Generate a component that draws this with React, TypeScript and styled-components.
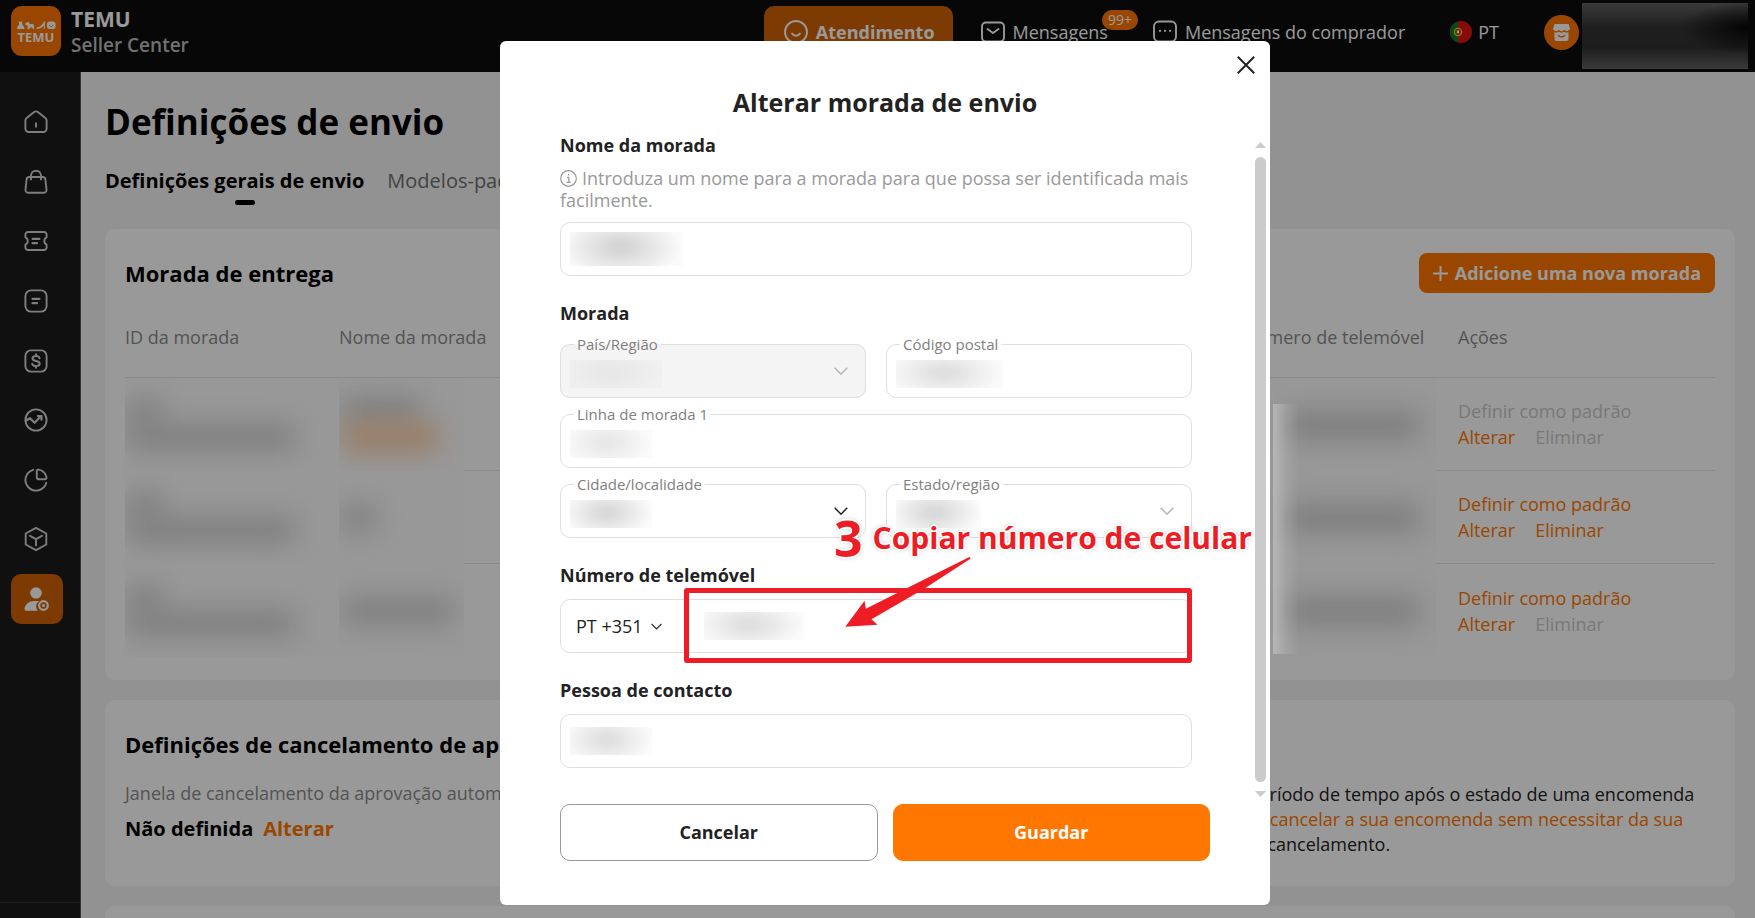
import React from "react";
import styled, { createGlobalStyle, css } from "styled-components";

const orange = "#ff7700";
const red = "#ee1c25";

const GlobalStyle = createGlobalStyle`
  *, *::before, *::after { box-sizing: border-box; }
  body {
    margin: 0;
    background: #f4f4f4;
    color: #000;
    font-family: "Open Sans", "Noto Sans", sans-serif;
    font-size: 18px;
    line-height: 24px;
  }
  button, input, select { font: inherit; color: inherit; }
  h1, h2, h3, p, fieldset { margin: 0; }
`;

/* ---------- page shell ---------- */

const Page = styled.div`
  display: flex;
  flex-direction: column;
  height: 100vh;
  overflow: hidden;
`;

const TopBar = styled.header`
  display: flex;
  align-items: flex-start;
  flex: none;
  height: 72px;
  padding: 0 7px 0 11px;
  background: #0d0d0d;
  color: #fff;
`;

const Brand = styled.a`
  display: flex;
  gap: 10px;
  margin-top: 6px;
  color: inherit;
  text-decoration: none;
`;

const BrandText = styled.span`
  display: flex;
  flex-direction: column;
`;

const BrandName = styled.strong`
  font-size: 21px;
  font-weight: 700;
  line-height: 26px;
`;

const BrandSub = styled.span`
  font-size: 19px;
  font-weight: 600;
  line-height: 26px;
  color: #bdbdbd;
`;

const TopNav = styled.nav`
  display: flex;
  align-items: center;
  gap: 45px;
  height: 64px;
  margin-left: auto;
`;

const NavGroup = styled.div`
  display: flex;
  align-items: center;
  gap: 28px;
`;

const SupportButton = styled.button`
  display: flex;
  align-items: center;
  gap: 8px;
  height: 52px;
  padding: 0 18px 0 20px;
  border: 0;
  border-radius: 10px;
  background: #d26105;
  color: #fff;
  font-weight: 700;
`;

const NavLink = styled.a`
  position: relative;
  display: flex;
  align-items: center;
  gap: 8px;
  color: #fff;
  text-decoration: none;
  white-space: nowrap;
`;

const CountBadge = styled.span`
  position: absolute;
  top: -10px;
  right: -30px;
  height: 20px;
  padding: 0 6px;
  border-radius: 10px;
  background: ${orange};
  font-size: 14px;
  line-height: 20px;
`;

const LanguageButton = styled.button`
  display: flex;
  align-items: center;
  gap: 6px;
  padding: 0;
  border: 0;
  background: none;
  color: #fff;
`;

const Account = styled.div`
  display: flex;
  align-items: center;
  gap: 3px;
`;

const AccountName = styled.span`
  width: 166px;
  height: 66px;
  margin-top: 8px;
  background: radial-gradient(ellipse 40% 40% at 100% 38%, #080808, transparent),
    linear-gradient(#626262, #353535 35%, #303030 68%, #626262);
`;

const Body = styled.div`
  display: flex;
  flex: 1;
  min-height: 0;
`;

const SideBar = styled.nav`
  display: flex;
  flex-direction: column;
  flex: none;
  width: 81px;
  padding-top: 25px;
  border-right: 1px solid #555;
  background: #1b1b1b;
`;

const SideList = styled.div`
  display: flex;
  flex-direction: column;
  justify-content: space-between;
  height: 527px;
  padding-left: 11px;
`;

const SideLink = styled.a<{ $active?: boolean }>`
  display: flex;
  align-items: center;
  width: 52px;
  height: 50px;
  padding-left: 13px;
  border-radius: 10px;
  color: ${(p) => (p.$active ? "#fff" : "#d2d2d2")};
  background: ${(p) => (p.$active ? "#d26105" : "transparent")};
`;

const SideFoot = styled.div`
  height: 16px;
  margin-top: auto;
  border-top: 1px solid #383838;
`;

const Main = styled.main`
  display: flex;
  flex: 1;
  flex-direction: column;
  gap: 20px;
  min-width: 0;
  padding: 26px 20px 0 24px;
`;

const PageHead = styled.div`
  padding-bottom: 14px;
`;

const PageTitle = styled.h1`
  font-size: 35px;
  font-weight: 700;
  line-height: 48px;
`;

const Tabs = styled.div`
  display: flex;
  gap: 23px;
  margin-top: 21px;
`;

const Tab = styled.a<{ $active?: boolean }>`
  position: relative;
  font-size: 20px;
  line-height: 28px;
  white-space: nowrap;
  text-decoration: none;
  color: #6f6f6f;
  ${(p) =>
    p.$active &&
    css`
      font-weight: 700;
      color: #000;
      &::after {
        content: "";
        position: absolute;
        top: 33px;
        left: 50%;
        width: 20px;
        height: 5px;
        border-radius: 3px;
        background: #000;
      }
    `}
`;

const Card = styled.section`
  padding: 24px 20px 23px;
  border-radius: 10px;
  background: #fff;
`;

const NextCard = styled(Card)`
  flex: 1;
  padding: 0;
  border-radius: 10px 10px 0 0;
`;

const CardHead = styled.div`
  display: flex;
  align-items: center;
  justify-content: space-between;
  height: 40px;
  margin-bottom: 3px;
`;

const CardTitle = styled.h2`
  font-size: 22px;
  font-weight: 700;
  line-height: 40px;
  white-space: nowrap;
`;

const AddButton = styled.button`
  display: flex;
  align-items: center;
  gap: 7px;
  height: 40px;
  padding: 0 14px;
  border: 0;
  border-radius: 8px;
  background: ${orange};
  color: #fff;
  font-weight: 700;
`;

/* ---------- address table ---------- */

const AddressTable = styled.table`
  width: 100%;
  table-layout: fixed;
  border-spacing: 0;
`;

const HeadCell = styled.th<{ $width?: number }>`
  width: ${(p) => (p.$width ? `${p.$width}px` : "auto")};
  height: 82px;
  padding: 0;
  border-bottom: 1px solid #e6e6e6;
  color: #8c8c8c;
  font-weight: 400;
  text-align: left;
  white-space: nowrap;
`;

const Cell = styled.td`
  height: 93px;
  padding: 0;
  border-bottom: 1px solid #e6e6e6;
  tr:last-child > & {
    border-bottom: 0;
  }
`;

const HiddenCell = styled(Cell)`
  border-bottom: 0;
  background: #fdfdfd;
`;

const SmudgeStack = styled.div<{ $indent?: number }>`
  display: flex;
  flex-direction: column;
  justify-content: center;
  height: 93px;
  padding-left: ${(p) => p.$indent ?? 0}px;
  overflow: hidden;
`;

const Smudge = styled.span<{ $width: number; $height: number; $tint?: string }>`
  flex: none;
  width: ${(p) => p.$width}px;
  height: ${(p) => p.$height}px;
  background: ${(p) => p.$tint ?? "#d0d0d0"};
  filter: blur(13px);
`;

const ActionCell = styled.div`
  display: flex;
  flex-wrap: wrap;
  column-gap: 20px;
  padding-left: 22px;
  line-height: 26px;
`;

const HeadInset = styled.span`
  padding-left: 22px;
`;

const TextButton = styled.button<{ $wide?: boolean }>`
  padding: 0;
  border: 0;
  background: none;
  line-height: 26px;
  color: ${orange};
  margin-right: ${(p) => (p.$wide ? "60px" : "0")};
  &:disabled {
    color: #cacaca;
  }
`;

/* ---------- cancellation card ---------- */

const CancelCard = styled(Card)`
  display: grid;
  grid-template-columns: 1fr 482px;
  height: 186px;
`;

const CancelLabel = styled.p`
  margin-top: 16px;
  line-height: 26px;
  color: #8c8c8c;
  white-space: nowrap;
`;

const CancelValue = styled.p`
  display: flex;
  gap: 10px;
  margin-top: 9px;
  font-size: 20px;
  font-weight: 700;
  line-height: 28px;
`;

const StrongLink = styled.a`
  color: ${orange};
  text-decoration: none;
`;

const CancelNote = styled.p`
  margin-top: 58px;
  line-height: 25px;
  color: #222;
  white-space: nowrap;
`;

const Accent = styled.span`
  color: ${orange};
`;

/* ---------- dialog ---------- */

const Backdrop = styled.div`
  position: fixed;
  inset: 0;
  display: flex;
  align-items: flex-start;
  justify-content: center;
  padding: 41px 0 0 15px;
  background: rgba(0, 0, 0, 0.4);
`;

const Dialog = styled.section`
  position: relative;
  width: 770px;
  padding-bottom: 44px;
  border-radius: 6px;
  background: #fff;
  color: #222;
`;

/* light bleeding out of the dialog over the hidden phone column */
const EdgeGlow = styled.div`
  position: absolute;
  top: 363px;
  left: calc(100% + 3px);
  width: 26px;
  height: 250px;
  background: linear-gradient(90deg, rgba(255, 255, 255, 0.3), rgba(255, 255, 255, 0.1) 50%, transparent);
`;

const DialogTitle = styled.h2`
  padding: 44px 0 14px;
  font-size: 25px;
  font-weight: 700;
  line-height: 34px;
  text-align: center;
`;

const CloseButton = styled.button`
  position: absolute;
  top: 12px;
  right: 12px;
  display: grid;
  place-items: center;
  width: 24px;
  height: 24px;
  padding: 0;
  border: 0;
  background: none;
`;

const DialogBody = styled.div`
  display: flex;
  gap: 63px;
  padding: 0 4px 0 60px;
`;

const Form = styled.form`
  display: flex;
  flex: 1;
  flex-direction: column;
  gap: 25px;
  min-width: 0;
  padding-bottom: 34px;
`;

const Group = styled.div`
  position: relative;
`;

const Label = styled.label`
  display: block;
  margin-bottom: 12px;
  font-weight: 700;
`;

const GroupTitle = styled.h3`
  margin-bottom: 9px;
  font-size: 18px;
  font-weight: 700;
  line-height: 24px;
`;

const Hint = styled.p`
  margin: -2px 0 11px;
  line-height: 22px;
  color: #999;
  svg {
    margin-right: 5px;
    vertical-align: -2px;
  }
`;

const Box = styled.div`
  display: flex;
  align-items: center;
  height: 54px;
  padding: 0 17px 0 9px;
  border: 1px solid #dedede;
  border-radius: 10px;
`;

const TextInput = styled.input`
  flex: 1;
  min-width: 0;
  height: 32px;
  padding: 0 8px;
  border: 0;
  outline: 0;
  background: none;
`;

const Mask = styled.span<{ $width: number; $height?: number; $tone?: string }>`
  flex: none;
  width: ${(p) => p.$width}px;
  height: ${(p) => p.$height ?? 28}px;
  background: radial-gradient(
    ellipse 55% 95% at 45% 45%,
    ${(p) => p.$tone ?? "#e0e0e0"} 15%,
    rgba(170, 170, 170, 0.05)
  );
`;

const Fields = styled.div`
  display: grid;
  grid-template-columns: 1fr 1fr;
  gap: 6px 20px;
`;

const Outlined = styled.fieldset<{ $full?: boolean; $muted?: boolean }>`
  grid-column: ${(p) => (p.$full ? "1 / -1" : "auto")};
  min-width: 0;
  height: 64px;
  padding: 0 17px 0 9px;
  border: 1px solid #dedede;
  border-radius: 10px;
  background: ${(p) => (p.$muted ? "#f4f4f4" : "transparent")};
`;

const Legend = styled.legend`
  margin-left: 4px;
  padding: 0 3px;
  font-size: 15px;
  line-height: 20px;
  color: #808080;
`;

const Line = styled.div`
  display: flex;
  align-items: center;
  height: 40px;
  svg {
    margin-bottom: 6px;
  }
`;

const SelectInput = styled.select`
  flex: 1;
  min-width: 0;
  height: 32px;
  padding: 0;
  border: 0;
  outline: 0;
  appearance: none;
  background: none;
`;

const PrefixSelect = styled.select`
  width: 68px;
  padding: 0;
  border: 0;
  outline: 0;
  appearance: none;
  background: none;
`;

const PrefixPart = styled.div`
  display: flex;
  align-items: center;
  gap: 7px;
  width: 134px;
  padding-left: 6px;
`;

const Highlight = styled.div`
  position: absolute;
  inset: 25px 0 -10px 124px;
  border: 5px solid ${red};
  border-radius: 3px;
  pointer-events: none;
`;

const Callout = styled.div`
  position: absolute;
  top: -50px;
  left: 274px;
  display: flex;
  align-items: center;
  gap: 10px;
  color: ${red};
  font-size: 30px;
  font-weight: 700;
  line-height: 50px;
  white-space: nowrap;
  pointer-events: none;
  text-shadow: 2px 0 #fff, -2px 0 #fff, 0 2px #fff, 0 -2px #fff, 1px 1px #fff,
    -1px -1px #fff, 1px -1px #fff, -1px 1px #fff, 0 0 4px #777;
`;

const CalloutNumber = styled.span`
  font-size: 50px;
`;

const CalloutArrow = styled.svg`
  position: absolute;
  top: -6px;
  left: 285px;
  pointer-events: none;
`;

const ScrollTrack = styled.div`
  display: flex;
  flex: none;
  flex-direction: column;
  align-items: center;
  gap: 9px;
  width: 11px;
  padding: 9px 0 5px;
`;

const ScrollThumb = styled.div`
  flex: 1;
  width: 11px;
  border-radius: 6px;
  background: #cbcbcb;
`;

const DialogFoot = styled.div`
  display: grid;
  grid-template-columns: 1fr 1fr;
  gap: 15px;
  padding: 2px 60px 0;
`;

const DialogButton = styled.button<{ $primary?: boolean }>`
  height: 57px;
  padding-bottom: 3px;
  border: 1px solid ${(p) => (p.$primary ? orange : "#999")};
  border-radius: 10px;
  background: ${(p) => (p.$primary ? orange : "#fff")};
  color: ${(p) => (p.$primary ? "#fff" : "#222")};
  font-weight: 700;
`;

/* ---------- drawings ---------- */

const Icon = ({ children, size = 24 }: { children: React.ReactNode; size?: number }) => (
  <svg
    width={size}
    height={size}
    viewBox="0 0 24 24"
    fill="none"
    stroke="currentColor"
    strokeWidth="1.9"
    strokeLinecap="round"
    strokeLinejoin="round"
    aria-hidden="true"
  >
    {children}
  </svg>
);

const sideIcons: { name: string; drawing: React.ReactNode }[] = [
  {
    name: "Início",
    drawing: (
      <>
        <path d="M1.4 10.6c0-1 .4-1.9 1.2-2.5L9.8 2.3a3.4 3.4 0 0 1 4.4 0l7.2 5.8c.8.6 1.2 1.5 1.2 2.5v8.2a3.2 3.2 0 0 1-3.2 3.2H4.6a3.2 3.2 0 0 1-3.2-3.2z" />
        <path d="M12 13.2v3.6" />
      </>
    ),
  },
  {
    name: "Produtos",
    drawing: (
      <>
        <path d="M5.4 7h13.2c1.5 0 2.6 1 2.8 2.4l1.1 10c.2 1.9-1 3.3-2.9 3.3H4.4c-1.9 0-3.1-1.4-2.9-3.3l1.1-10C2.8 8 3.9 7 5.4 7z" />
        <path d="M7 9.5V5.8a5 5 0 0 1 10 0v3.7" />
      </>
    ),
  },
  {
    name: "Cupões",
    drawing: (
      <>
        <path d="M4 3h16a2.6 2.6 0 0 1 2.6 2.6v2.7c-1.5.7-2.3 2-2.3 3.7s.8 3 2.3 3.7v2.7A2.6 2.6 0 0 1 20 21H4a2.6 2.6 0 0 1-2.6-2.6v-2.7c1.5-.7 2.3-2 2.3-3.7s-.8-3-2.3-3.7V5.6A2.6 2.6 0 0 1 4 3z" />
        <path d="M8.5 9.8h7M8.5 14.2H13" strokeWidth="2.2" />
      </>
    ),
  },
  {
    name: "Encomendas",
    drawing: (
      <>
        <rect x="1.4" y="1.4" width="21.2" height="21.2" rx="5.5" />
        <path d="M8.5 9.8h7M8.5 14.2H13" strokeWidth="2.2" />
      </>
    ),
  },
  {
    name: "Finanças",
    drawing: (
      <>
        <rect x="1.4" y="1.4" width="21.2" height="21.2" rx="5.5" />
        <path d="M15.6 9.2c-.3-1.4-1.7-2.2-3.6-2.2-2 0-3.5.9-3.5 2.5 0 3.5 7.2 1.5 7.2 5 0 1.6-1.6 2.5-3.7 2.5s-3.5-.9-3.8-2.3M12 5.3V7M12 17v1.7" strokeWidth="2" />
      </>
    ),
  },
  {
    name: "Crescimento",
    drawing: (
      <>
        <circle cx="12" cy="12" r="10.6" />
        <path d="M2 12.5l4-2.3 4.6 4.6 6-6.3M13.8 8h3.7v3.7" strokeWidth="2.2" />
      </>
    ),
  },
  {
    name: "Dados",
    drawing: (
      <>
        <path d="M9.2 1.8A10.6 10.6 0 1 0 22.3 14.8" />
        <path d="M12.8 3.2c0-1 .8-1.8 1.8-1.6 4.2.8 7 3.6 7.9 7.8.2 1-.6 1.9-1.6 1.9h-5.7a2.4 2.4 0 0 1-2.4-2.4z" />
      </>
    ),
  },
  {
    name: "Logística",
    drawing: (
      <>
        <path d="M12 .9l10.3 5.6v11L12 23.1 1.7 17.500v-11z" />
        <path d="M6 8.8l6 3.4 6-3.4M12 12.2v6.3" />
      </>
    ),
  },
];

const LogoMark = () => (
  <svg width="50" height="50" viewBox="0 0 50 50" aria-hidden="true">
    <rect width="50" height="50" rx="11" fill={orange} />
    <g fill="#fff">
      <path d="M7.5 15.5h1.200l.6.9.6-.9h1.300l-.2 2.700c1.600 1.500 2.300 3 2.600 4.800H6c.3-1.800 1-3.300 2.300-4.800z" />
      <path d="M14.500 16.800l3.500-.7.7 1.900h2.600l1.800.7-.6 1 1 .8-.8 1.200.8 1.200-1.700-.2-.9-1.200-1.500.1-1.200 1.400-2.200.2.9-1.700-.6-2.200-1.900-.2z" />
      <path d="M25.500 21.500c3.500-.3 5.800-2.400 7.500-6.200l1 .4-.3 7.300-.9-.1-.2-3.700c-1.600 2.600-3.700 3.700-7 3.700z" />
      <rect x="36" y="15.5" width="8.5" height="7.5" rx="2.5" />
    </g>
    <path d="M38.200 19.500l2 1.300 2.200-1.900" fill="none" stroke={orange} />
    <text x="25" y="36" textAnchor="middle" fontSize="13" fontWeight="700" fill="#fff">
      TEMU
    </text>
  </svg>
);

const Flag = () => (
  <svg width="22" height="22" viewBox="0 0 22 22" aria-hidden="true">
    <circle cx="11" cy="11" r="11" fill="#e01410" />
    <path d="M8 .4a11 11 0 0 0 0 21.200z" fill="#0a7a28" />
    <circle cx="8" cy="11" r="3.6" fill="none" stroke="#f2d21c" strokeWidth="1.3" />
    <path d="M6.500 9h3v2.500a1.500 1.500 0 0 1-3 0z" fill="#fff" stroke="#e01410" strokeWidth=".8" />
  </svg>
);

const ShopAvatar = () => (
  <svg width="35" height="35" viewBox="0 0 35 35" aria-hidden="true">
    <circle cx="17.5" cy="17.5" r="17.5" fill={orange} />
    <path d="M10.500 9h14l1.500 5a2.600 2.600 0 0 1-1.500 2.600V24a2 2 0 0 1-2 2h-10a2 2 0 0 1-2-2v-7.400A2.600 2.600 0 0 1 9 14z" fill="#fff" />
    <path d="M9.500 15.500c1.500 1.800 3.600 1.800 5.300.2 1.700 1.500 3.800 1.500 5.400 0 1.700 1.600 3.800 1.600 5.300-.2M14.500 20.500c1.700 1.900 4.300 1.900 6 0" fill="none" stroke={orange} strokeWidth="1.5" strokeLinecap="round" />
  </svg>
);

const Chevron = ({ color = "#222", width = 14 }: { color?: string; width?: number }) => (
  <svg width={width} height={width} viewBox="0 0 14 14" fill="none" stroke={color} strokeWidth="1.5" aria-hidden="true">
    <path d="M.7 3.7L7 10.2l6.300-6.500" />
  </svg>
);

const rows = [
  { canDefault: false, canDelete: false, highlighted: true, nameWidth: 76 },
  { canDefault: true, canDelete: true, highlighted: false, nameWidth: 32 },
  { canDefault: true, canDelete: false, highlighted: false, nameWidth: 110 },
];

const AddressRow = ({ row }: { row: (typeof rows)[number] }) => (
  <tr>
    <HiddenCell>
      <SmudgeStack $indent={3}>
        <Smudge $width={34} $height={24} />
        <Smudge $width={166} $height={24} />
      </SmudgeStack>
    </HiddenCell>
    <HiddenCell>
      <SmudgeStack $indent={4}>
        <Smudge $width={row.nameWidth} $height={24} />
        {row.highlighted && <Smudge $width={94} $height={30} $tint="#ffd0a8" />}
      </SmudgeStack>
    </HiddenCell>
    <Cell />
    <HiddenCell>
      <SmudgeStack $indent={46}>
        <Smudge $width={130} $height={28} />
      </SmudgeStack>
    </HiddenCell>
    <Cell>
      <ActionCell>
        <TextButton $wide disabled={!row.canDefault}>Definir como padrão</TextButton>
        <TextButton>Alterar</TextButton>
        <TextButton disabled={!row.canDelete}>Eliminar</TextButton>
      </ActionCell>
    </Cell>
  </tr>
);

export default function App() {
  return (
    <>
      <GlobalStyle />
      <Page>
        <TopBar>
          <Brand href="#">
            <LogoMark />
            <BrandText>
              <BrandName>TEMU</BrandName>
              <BrandSub>Seller Center</BrandSub>
            </BrandText>
          </Brand>
          <TopNav>
            <NavGroup>
              <SupportButton>
                <Icon>
                  <circle cx="12" cy="12" r="11" />
                  <path d="M8 13.5c2 3 6 3 8 0" />
                </Icon>
                Atendimento
              </SupportButton>
              <NavLink href="#">
                <Icon>
                  <rect x="1" y="2.5" width="22" height="19" rx="4" />
                  <path d="M6.5 9l5.500 4 5.500-4" />
                </Icon>
                Mensagens
                <CountBadge>99+</CountBadge>
              </NavLink>
            </NavGroup>
            <NavLink href="#">
              <Icon>
                <rect x="1" y="1.5" width="22" height="20" rx="5" />
                <path d="M7 10.8h.1M12 10.8h.1M17 10.8h.1" strokeWidth="2.2" />
              </Icon>
              Mensagens do comprador
            </NavLink>
            <LanguageButton>
              <Flag />
              PT
            </LanguageButton>
            <Account>
              <ShopAvatar />
              <AccountName />
            </Account>
          </TopNav>
        </TopBar>

        <Body>
          <SideBar>
            <SideList>
              {sideIcons.map((item) => (
                <SideLink key={item.name} href="#" aria-label={item.name}>
                  <Icon>{item.drawing}</Icon>
                </SideLink>
              ))}
              <SideLink href="#" aria-label="Conta" $active>
                <svg width="26" height="24" viewBox="0 0 26 24" fill="currentColor" aria-hidden="true">
                  <circle cx="12" cy="6" r="5.8" />
                  <path d="M10 14h5.200a6.300 6.300 0 0 0-1.400 9.800H2.500C1.200 23.800.5 23 .5 22 1 17.500 5 14 10 14z" />
                  <circle cx="19.5" cy="18.5" r="4.3" fill="none" stroke="currentColor" strokeWidth="2.2" />
                  <circle cx="19.5" cy="18.5" r="1.5" />
                </svg>
              </SideLink>
            </SideList>
            <SideFoot />
          </SideBar>

          <Main>
            <PageHead>
              <PageTitle>Definições de envio</PageTitle>
              <Tabs>
                <Tab href="#" $active>Definições gerais de envio</Tab>
                <Tab href="#">Modelos-padrão</Tab>
              </Tabs>
            </PageHead>

            <Card>
              <CardHead>
                <CardTitle>Morada de entrega</CardTitle>
                <AddButton>
                  <svg width="15" height="15" viewBox="0 0 15 15" stroke="currentColor" strokeWidth="2" aria-hidden="true">
                    <path d="M7.500 0v15M0 7.500h15" />
                  </svg>
                  Adicione uma nova morada
                </AddButton>
              </CardHead>
              <AddressTable>
                <thead>
                  <tr>
                    <HeadCell $width={214}>ID da morada</HeadCell>
                    <HeadCell $width={125}>Nome da morada</HeadCell>
                    <HeadCell />
                    <HeadCell $width={194}>Número de telemóvel</HeadCell>
                    <HeadCell $width={279}>
                      <HeadInset>Ações</HeadInset>
                    </HeadCell>
                  </tr>
                </thead>
                <tbody>
                  {rows.map((row, i) => (
                    <AddressRow key={i} row={row} />
                  ))}
                </tbody>
              </AddressTable>
            </Card>

            <CancelCard>
              <div>
                <CardTitle>Definições de cancelamento de aprovação</CardTitle>
                <CancelLabel>Janela de cancelamento da aprovação automática</CancelLabel>
                <CancelValue>
                  Não definida <StrongLink href="#">Alterar</StrongLink>
                </CancelValue>
              </div>
              <CancelNote>
                o período de tempo após o estado de uma encomenda
                <br />
                <Accent>que cancelar a sua encomenda sem necessitar da sua</Accent>
                <br />
                seu cancelamento.
              </CancelNote>
            </CancelCard>

            <NextCard />
          </Main>
        </Body>
      </Page>

      <Backdrop>
        <Dialog role="dialog" aria-modal="true" aria-labelledby="dialog-title">
          <EdgeGlow />
          <CloseButton aria-label="Fechar">
            <svg width="18" height="18" viewBox="0 0 18 18" stroke="currentColor" strokeWidth="2" aria-hidden="true">
              <path d="M.8.8l16.400 16.400M17.200.8L.8 17.200" />
            </svg>
          </CloseButton>
          <DialogTitle id="dialog-title">Alterar morada de envio</DialogTitle>

          <DialogBody>
            <Form>
              <Group>
                <Label htmlFor="address-name">Nome da morada</Label>
                <Hint>
                  <svg width="17" height="17" viewBox="0 0 17 17" fill="none" stroke="currentColor" strokeWidth="1.2" aria-hidden="true">
                    <circle cx="8.5" cy="8.5" r="7.8" />
                    <path d="M7 7.300h1.800v5M6.500 12.400h4.300M8.600 4v1.500" />
                  </svg>
                  Introduza um nome para a morada para que possa ser identificada mais facilmente.
                </Hint>
                <Box>
                  <Mask $width={112} $height={34} $tone="#d6d6d6" />
                  <TextInput id="address-name" />
                </Box>
              </Group>

              <Group>
                <GroupTitle>Morada</GroupTitle>
                <Fields>
                  <Outlined $muted>
                    <Legend><label htmlFor="country">País/Região</label></Legend>
                    <Line>
                      <Mask $width={92} $tone="#e8e8e8" />
                      <SelectInput id="country" disabled />
                      <Chevron color="#b5b5b5" />
                    </Line>
                  </Outlined>
                  <Outlined>
                    <Legend><label htmlFor="postcode">Código postal</label></Legend>
                    <Line>
                      <Mask $width={107} />
                      <TextInput id="postcode" />
                    </Line>
                  </Outlined>
                  <Outlined $full>
                    <Legend><label htmlFor="line1">Linha de morada 1</label></Legend>
                    <Line>
                      <Mask $width={82} $tone="#e8e8e8" />
                      <TextInput id="line1" />
                    </Line>
                  </Outlined>
                  <Outlined>
                    <Legend><label htmlFor="city">Cidade/localidade</label></Legend>
                    <Line>
                      <Mask $width={82} $tone="#dadada" />
                      <SelectInput id="city" />
                      <Chevron />
                    </Line>
                  </Outlined>
                  <Outlined>
                    <Legend><label htmlFor="state">Estado/região</label></Legend>
                    <Line>
                      <Mask $width={85} $tone="#dadada" />
                      <SelectInput id="state" />
                      <Chevron color="#b5b5b5" />
                    </Line>
                  </Outlined>
                </Fields>
              </Group>

              <Group>
                <Label htmlFor="phone">Número de telemóvel</Label>
                <Box>
                  <PrefixPart>
                    <PrefixSelect aria-label="Indicativo" defaultValue="351">
                      <option value="351">PT +351</option>
                    </PrefixSelect>
                    <Chevron width={11} />
                  </PrefixPart>
                  <Mask $width={100} />
                  <TextInput id="phone" />
                </Box>
                <Highlight />
                <Callout>
                  <CalloutNumber>3</CalloutNumber>
                  <span>Copiar número de celular</span>
                </Callout>
                <CalloutArrow width="126" height="70" viewBox="76 290 378 211" fill={red} aria-hidden="true">
                  <path d="M76 500L134 422L138 446L270 380L450 290Q455 292 452 296L315 385L155 478L173 494Z" />
                </CalloutArrow>
              </Group>

              <Group>
                <Label htmlFor="contact">Pessoa de contacto</Label>
                <Box>
                  <Mask $width={82} />
                  <TextInput id="contact" />
                </Box>
              </Group>
            </Form>

            <ScrollTrack aria-hidden="true">
              <svg width="11" height="6" viewBox="0 0 11 6" fill="#cbcbcb">
                <path d="M0 6L5.500 0 11 6z" />
              </svg>
              <ScrollThumb />
              <svg width="11" height="6" viewBox="0 0 11 6" fill="#cbcbcb">
                <path d="M0 0L5.500 6 11 0z" />
              </svg>
            </ScrollTrack>
          </DialogBody>

          <DialogFoot>
            <DialogButton>Cancelar</DialogButton>
            <DialogButton $primary>Guardar</DialogButton>
          </DialogFoot>
        </Dialog>
      </Backdrop>
    </>
  );
}
